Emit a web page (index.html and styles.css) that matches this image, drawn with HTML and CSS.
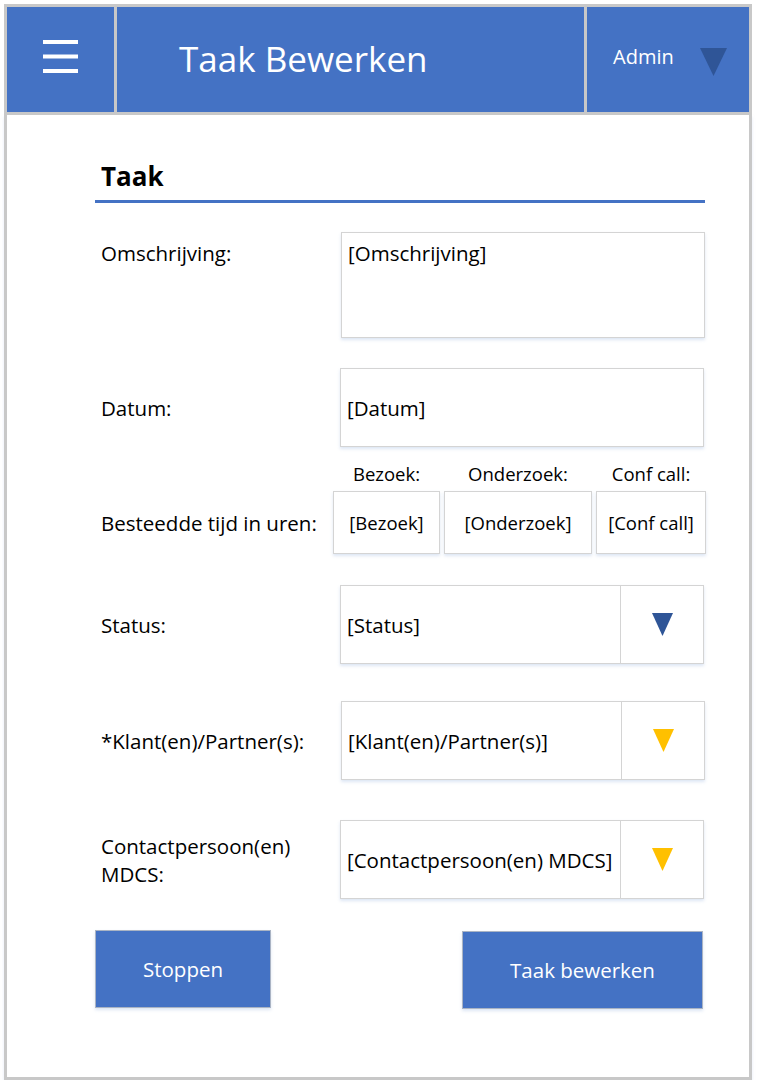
FILE: index.html
```html
<!DOCTYPE html>
<html lang="nl">
<head>
<meta charset="utf-8">
<title>Taak Bewerken</title>
<link rel="stylesheet" href="styles.css">
</head>
<body>
<div class="app">
  <header class="topbar">
    <div class="menu-box">
      <svg class="menu-icon" width="35" height="33" viewBox="0 0 35 33" aria-hidden="true">
        <rect x="0" y="0" width="35" height="4" fill="#ffffff"/>
        <rect x="0" y="14.5" width="35" height="4" fill="#ffffff"/>
        <rect x="0" y="29" width="35" height="4" fill="#ffffff"/>
      </svg>
    </div>
    <div class="title-box"><h1 class="title">Taak Bewerken</h1></div>
    <div class="user-box">
      <span class="user-name">Admin</span>
      <svg class="user-caret" width="27" height="28" viewBox="0 0 27 28" aria-hidden="true">
        <polygon points="0,0 27,0 13.5,28" fill="#2f5597"/>
      </svg>
    </div>
  </header>

  <main class="frame">
    <h2 class="section-title">Taak</h2>

    <div class="row row-top row-omschrijving">
      <span class="field-label label-top">Omschrijving:</span>
      <div class="input input-area">[Omschrijving]</div>
    </div>

    <div class="row row-datum">
      <span class="field-label">Datum:</span>
      <div class="input input-line">[Datum]</div>
    </div>

    <div class="row row-time">
      <span class="field-label label-time">Besteedde tijd in uren:</span>
      <div class="time-group">
        <div class="time-item time-bezoek">
          <span class="time-label">Bezoek:</span>
          <div class="input time-box">[Bezoek]</div>
        </div>
        <div class="time-item time-onderzoek">
          <span class="time-label">Onderzoek:</span>
          <div class="input time-box">[Onderzoek]</div>
        </div>
        <div class="time-item time-conf">
          <span class="time-label">Conf call:</span>
          <div class="input time-box">[Conf call]</div>
        </div>
      </div>
    </div>

    <div class="row row-status">
      <span class="field-label">Status:</span>
      <div class="input select">
        <span class="select-value">[Status]</span>
        <span class="select-button">
          <svg width="21" height="23" viewBox="0 0 21 23" aria-hidden="true"><polygon points="0,0 21,0 10.5,23" fill="#2f5597"/></svg>
        </span>
      </div>
    </div>

    <div class="row row-klant">
      <span class="field-label">*Klant(en)/Partner(s):</span>
      <div class="input select select-shift">
        <span class="select-value">[Klant(en)/Partner(s)]</span>
        <span class="select-button">
          <svg width="21" height="23" viewBox="0 0 21 23" aria-hidden="true"><polygon points="0,0 21,0 10.5,23" fill="#ffc000"/></svg>
        </span>
      </div>
    </div>

    <div class="row row-contact">
      <span class="field-label">Contactpersoon(en)<br>MDCS:</span>
      <div class="input select">
        <span class="select-value">[Contactpersoon(en) MDCS]</span>
        <span class="select-button">
          <svg width="21" height="23" viewBox="0 0 21 23" aria-hidden="true"><polygon points="0,0 21,0 10.5,23" fill="#ffc000"/></svg>
        </span>
      </div>
    </div>

    <div class="actions">
      <button class="btn btn-stop" type="button">Stoppen</button>
      <button class="btn btn-save" type="button">Taak bewerken</button>
    </div>
  </main>
</div>
</body>
</html>
```

FILE: styles.css
```css
* {
  box-sizing: border-box;
}

html, body {
  margin: 0;
  padding: 0;
  background: #ffffff;
}

body {
  font-family: "Open Sans", "Noto Sans", "Liberation Sans", sans-serif;
  color: #000000;
}

.app {
  width: 748px;
  margin: 4px 0 0 4px;
}

/* ---------- top bar ---------- */
.topbar {
  display: flex;
  height: 111px;
}

.menu-box,
.title-box,
.user-box {
  background: #4472c4;
  border: 3px solid #c8c8c8;
  height: 111px;
  display: flex;
  align-items: center;
}

.menu-box {
  width: 113px;
  justify-content: center;
}

.menu-icon {
  display: block;
  margin-bottom: 6px;
}

.title-box {
  width: 473px;
  margin-left: -3px;
  padding-left: 62px;
}

.title {
  margin: 0 0 2px 0;
  font-size: 35px;
  line-height: 1;
  font-weight: 400;
  color: #ffffff;
}

.user-box {
  width: 168px;
  margin-left: -3px;
  padding-left: 26px;
  gap: 26px;
}

.user-name {
  font-size: 20px;
  line-height: 1;
  color: #ffffff;
  margin-bottom: 5px;
}

.user-caret {
  display: block;
  margin-top: 5px;
}

/* ---------- frame ---------- */
.frame {
  display: block;
  border: 3px solid #c8c8c8;
  border-top: none;
  padding: 44px 44px 68px 88px;
  box-shadow: 0 2px 3px rgba(180, 199, 231, 0.35);
}

.section-title {
  margin: 0;
  padding: 0 0 7px 6px;
  font-size: 26px;
  line-height: 34px;
  font-weight: 700;
  border-bottom: 3px solid #4472c4;
}

/* ---------- rows ---------- */
.row {
  display: flex;
  align-items: center;
}

.row-top {
  align-items: flex-start;
}

.field-label {
  width: 245px;
  flex: none;
  padding-left: 6px;
  font-size: 20.5px;
  line-height: 28px;
}

.label-top {
  margin-top: 7px;
}

.input {
  background: #ffffff;
  border: 1px solid #d4d4d4;
  box-shadow: 0 2px 3px rgba(180, 199, 231, 0.45);
  font-size: 20.5px;
  line-height: 28px;
}

.row-omschrijving {
  margin-top: 29px;
}

.input-area {
  width: 364px;
  height: 106px;
  margin-left: 1px;
  padding: 6px 6px;
}

.row-datum {
  margin-top: 30px;
}

.input-line {
  width: 364px;
  height: 79px;
  padding: 0 6px;
  display: flex;
  align-items: center;
}

/* time row */
.row-time {
  margin-top: 15px;
  align-items: flex-end;
}

.label-time {
  width: 238px;
  height: 63px;
  display: flex;
  align-items: center;
}

.time-group {
  display: flex;
  gap: 4px;
}

.time-item {
  display: flex;
  flex-direction: column;
  align-items: center;
}

.time-label {
  font-size: 18.5px;
  line-height: 24px;
  margin-bottom: 5px;
}

.time-box {
  height: 63px;
  display: flex;
  align-items: center;
  justify-content: center;
  font-size: 18.5px;
  line-height: 24px;
}

.time-bezoek .time-box { width: 107px; }
.time-onderzoek .time-box { width: 148px; }
.time-conf .time-box { width: 110px; }

/* selects */
.row-status {
  margin-top: 31px;
}

.row-klant {
  margin-top: 37px;
}

.row-contact {
  margin-top: 40px;
}

.select {
  width: 364px;
  height: 79px;
  display: flex;
  align-items: stretch;
}

.select-shift {
  margin-left: 1px;
}

.select-value {
  flex: 1;
  display: flex;
  align-items: center;
  padding-left: 6px;
  white-space: nowrap;
}

.select-button {
  width: 83px;
  flex: none;
  border-left: 1px solid #d4d4d4;
  display: flex;
  align-items: center;
  justify-content: center;
}

.select-button svg {
  display: block;
}

/* actions */
.actions {
  margin-top: 31px;
  padding-right: 2px;
  display: flex;
  justify-content: space-between;
  align-items: flex-start;
}

.btn {
  height: 78px;
  background: #4472c4;
  border: 1px solid #aab4c4;
  color: #ffffff;
  font-family: "Open Sans", "Noto Sans", "Liberation Sans", sans-serif;
  font-size: 20.5px;
  line-height: 28px;
  padding: 0;
  box-shadow: 0 2px 3px rgba(180, 199, 231, 0.45);
}

.btn-stop {
  width: 176px;
}

.btn-save {
  width: 241px;
  margin-top: 1px;
}
```
